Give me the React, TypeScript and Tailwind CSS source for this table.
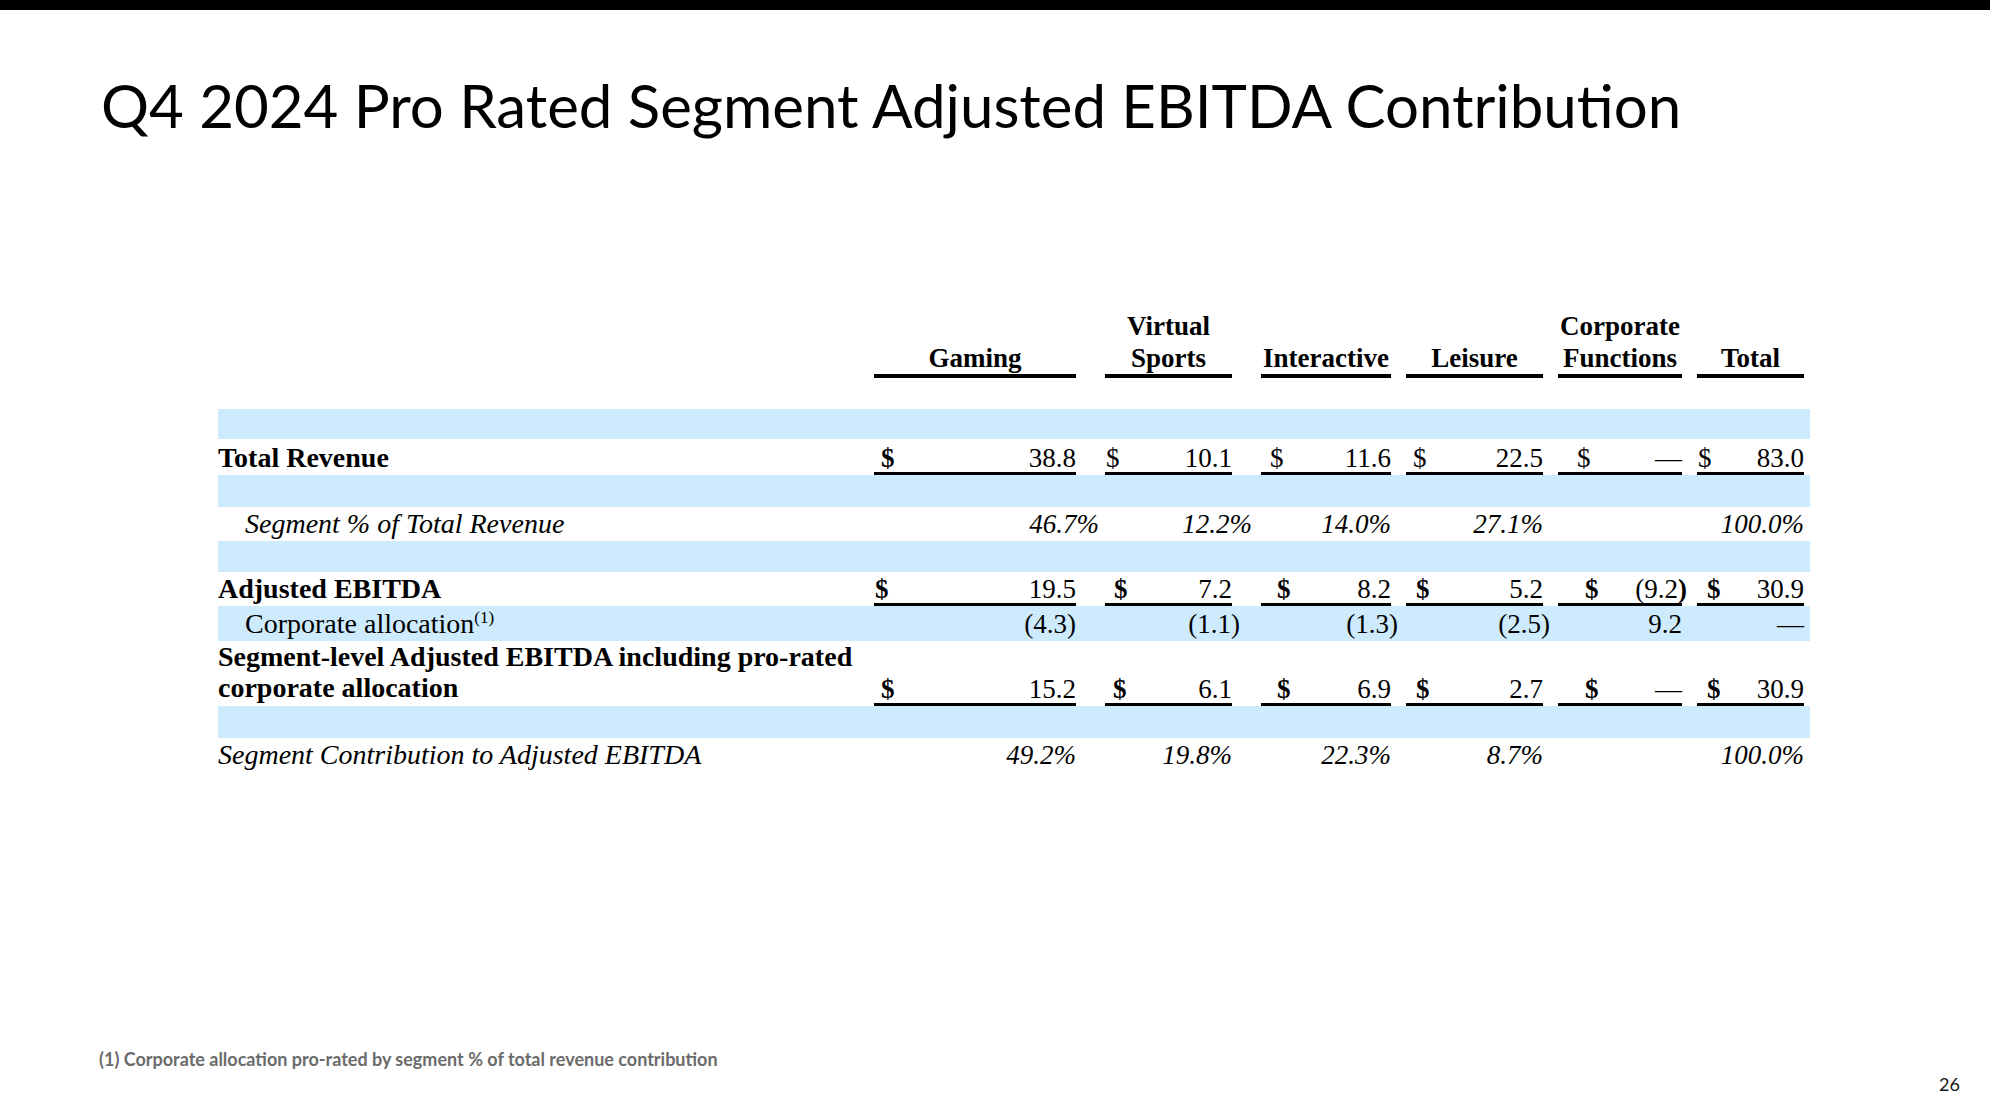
import React from "react";

type Cell = {
  v?: React.ReactNode;
  d?: string; // dollar sign offset class, omitted when no $
  db?: boolean; // bold dollar
  vc?: string; // extra classes on the value (hanging parens etc.)
  u?: boolean; // underline
};

const cols = [
  { w: "w-[202px]", ml: "ml-0" },
  { w: "w-[127px]", ml: "ml-[29px]" },
  { w: "w-[130px]", ml: "ml-[29px]" },
  { w: "w-[137px]", ml: "ml-[15px]" },
  { w: "w-[124px]", ml: "ml-[15px]" },
  { w: "w-[107px]", ml: "ml-[15px]" },
];

const heads: React.ReactNode[] = [
  "Gaming",
  <>Virtual<br />Sports</>,
  "Interactive",
  "Leisure",
  <>Corporate<br />Functions</>,
  "Total",
];

const totalRevenue: Cell[] = [
  { d: "ml-[7px]", db: true, v: "38.8", u: true },
  { d: "ml-[1px]", v: "10.1", u: true },
  { d: "ml-[9px]", v: "11.6", u: true },
  { d: "ml-[7px]", v: "22.5", u: true },
  { d: "ml-[19px]", v: "—", u: true },
  { d: "ml-[1px]", v: "83.0", u: true },
];

const segPct: Cell[] = [
  { v: "46.7%", vc: "-mr-[23px]" },
  { v: "12.2%", vc: "-mr-[20px]" },
  { v: "14.0%" },
  { v: "27.1%" },
  { v: "" },
  { v: "100.0%" },
];

const adjEbitda: Cell[] = [
  { d: "ml-[1px]", db: true, v: "19.5", u: true },
  { d: "ml-[9px]", db: true, v: "7.2", u: true },
  { d: "ml-[16px]", db: true, v: "8.2", u: true },
  { d: "ml-[10px]", db: true, v: "5.2", u: true },
  { d: "ml-[27px]", db: true, v: <>(9.2<b>)</b></>, vc: "-mr-[5px]", u: true },
  { d: "ml-[10px]", db: true, v: "30.9", u: true },
];

const corpAlloc: Cell[] = [
  { v: "(4.3)" },
  { v: "(1.1)", vc: "-mr-[8px]" },
  { v: "(1.3)", vc: "-mr-[7px]" },
  { v: "(2.5)", vc: "-mr-[7px]" },
  { v: "9.2" },
  { v: "—" },
];

const segLevel: Cell[] = [
  { d: "ml-[7px]", db: true, v: "15.2", u: true },
  { d: "ml-[8px]", db: true, v: "6.1", u: true },
  { d: "ml-[16px]", db: true, v: "6.9", u: true },
  { d: "ml-[10px]", db: true, v: "2.7", u: true },
  { d: "ml-[27px]", db: true, v: "—", u: true },
  { d: "ml-[10px]", db: true, v: "30.9", u: true },
];

const segContrib: Cell[] = [
  { v: "49.2%" },
  { v: "19.8%" },
  { v: "22.3%" },
  { v: "8.7%" },
  { v: "" },
  { v: "100.0%" },
];

function Band({ h }: { h: string }) {
  return <div className={"bg-[#cdebfc] " + h} />;
}

function Row({
  label,
  cells,
  h,
  blue,
  italic,
  labelCls = "",
}: {
  label: React.ReactNode;
  cells: Cell[];
  h: string;
  blue?: boolean;
  italic?: boolean;
  labelCls?: string;
}) {
  return (
    <div className={"flex items-end " + h + (blue ? " bg-[#cdebfc]" : " bg-white")}>
      <div className={"w-[656px] shrink-0 border-b-[3px] border-transparent text-[28px] leading-[28px] whitespace-nowrap " + labelCls}>
        {label}
      </div>
      {cells.map((c, i) => (
        <div
          key={i}
          className={
            "shrink-0 flex justify-between leading-[28px] border-b-[3px] " +
            cols[i].w +
            " " +
            cols[i].ml +
            (c.u ? " border-black" : " border-transparent") +
            (italic ? " italic" : "")
          }
        >
          <span className={c.d ? c.d + (c.db ? " font-bold" : "") : ""}>{c.d ? "$" : ""}</span>
          <span className={"whitespace-nowrap " + (c.vc ?? "")}>{c.v}</span>
        </div>
      ))}
    </div>
  );
}

export default function App() {
  return (
    <div className="w-[1990px] h-[1120px] bg-white flex flex-col overflow-hidden text-black">
      <div className="h-[10px] bg-black shrink-0" />
      <h1 className="mt-[65px] pl-[101px] text-[60px] leading-[60px] font-['Lato',sans-serif] font-normal whitespace-nowrap">
        Q4 2024 Pro Rated Segment Adjusted EBITDA Contribution
      </h1>

      <div className="mt-[175px] ml-[218px] w-[1592px] font-['Liberation_Serif',serif] text-[27px]">
        {/* column headers */}
        <div className="flex items-end">
          <div className="w-[656px] shrink-0" />
          {heads.map((t, i) => (
            <div
              key={i}
              className={
                "shrink-0 text-center font-bold leading-[32px] border-b-4 border-black " +
                cols[i].w +
                " " +
                cols[i].ml
              }
            >
              {t}
            </div>
          ))}
        </div>
        <div className="h-[31px]" />

        <Band h="h-[30px]" />
        <Row label="Total Revenue" labelCls="font-bold" cells={totalRevenue} h="h-[36px]" />
        <Band h="h-[32px]" />
        <Row
          label="Segment % of Total Revenue"
          labelCls="italic pl-[27px]"
          italic
          cells={segPct}
          h="h-[34px]"
        />
        <Band h="h-[31px]" />
        <Row label="Adjusted EBITDA" labelCls="font-bold" cells={adjEbitda} h="h-[34px]" />
        <Row
          label={
            <>
              Corporate allocation
              <span className="relative -top-[10px] text-[17px] leading-[0]">(1)</span>
            </>
          }
          labelCls="pl-[27px]"
          cells={corpAlloc}
          h="h-[35px]"
          blue
        />
        <Row
          label={
            <span className="block leading-[31px]">
              Segment-level Adjusted EBITDA including pro-rated
              <br />
              corporate allocation
            </span>
          }
          labelCls="font-bold"
          cells={segLevel}
          h="h-[65px]"
        />
        <Band h="h-[32px]" />
        <Row
          label="Segment Contribution to Adjusted EBITDA"
          labelCls="italic"
          italic
          cells={segContrib}
          h="h-[34px]"
        />
      </div>

      <div className="mt-auto pb-[26px] font-['Lato',sans-serif]">
        <div className="pl-[99px] h-[20px] leading-[20px] text-[18px] font-bold text-[#6b6b6b]">
          (1) Corporate allocation pro-rated by segment % of total revenue contribution
        </div>
        <div className="mt-[5px] pr-[30px] h-[20px] leading-[20px] text-[18px] text-right text-[#1a1a1a]">
          26
        </div>
      </div>
    </div>
  );
}
